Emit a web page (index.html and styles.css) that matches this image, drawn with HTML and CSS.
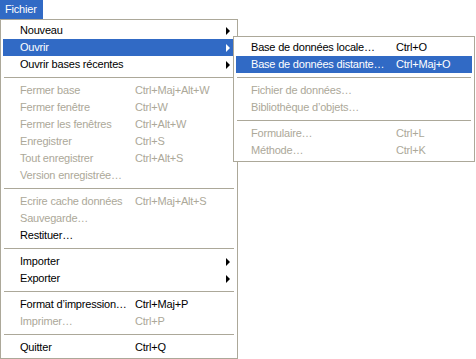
FILE: index.html
```html
<!DOCTYPE html>
<html lang="fr">
<head>
    <meta charset="UTF-8">
    <title>Fichier</title>
    <link rel="stylesheet" href="styles.css">
</head>
<body>
    <div class="menubar">
        <span class="menubar-item active">Fichier</span>
    </div>

    <div class="menu main-menu">
        <div class="item"><span class="label">Nouveau</span><span class="arrow"></span></div>
        <div class="item selected">
            <span class="label">Ouvrir</span><span class="arrow"></span>
            <div class="menu sub-menu">
                <div class="item"><span class="label">Base de données locale…</span><span class="key">Ctrl+O</span></div>
                <div class="item selected"><span class="label">Base de données distante…</span><span class="key">Ctrl+Maj+O</span></div>
                <div class="sep"></div>
                <div class="item disabled"><span class="label">Fichier de données…</span></div>
                <div class="item disabled"><span class="label">Bibliothèque d’objets…</span></div>
                <div class="sep"></div>
                <div class="item disabled"><span class="label">Formulaire…</span><span class="key">Ctrl+L</span></div>
                <div class="item disabled"><span class="label">Méthode…</span><span class="key">Ctrl+K</span></div>
            </div>
        </div>
        <div class="item"><span class="label">Ouvrir bases récentes</span><span class="arrow"></span></div>
        <div class="sep"></div>
        <div class="item disabled"><span class="label">Fermer base</span><span class="key">Ctrl+Maj+Alt+W</span></div>
        <div class="item disabled"><span class="label">Fermer fenêtre</span><span class="key">Ctrl+W</span></div>
        <div class="item disabled"><span class="label">Fermer les fenêtres</span><span class="key">Ctrl+Alt+W</span></div>
        <div class="item disabled"><span class="label">Enregistrer</span><span class="key">Ctrl+S</span></div>
        <div class="item disabled"><span class="label">Tout enregistrer</span><span class="key">Ctrl+Alt+S</span></div>
        <div class="item disabled"><span class="label">Version enregistrée…</span></div>
        <div class="sep"></div>
        <div class="item disabled"><span class="label">Ecrire cache données</span><span class="key">Ctrl+Maj+Alt+S</span></div>
        <div class="item disabled"><span class="label">Sauvegarde…</span></div>
        <div class="item"><span class="label">Restituer…</span></div>
        <div class="sep"></div>
        <div class="item"><span class="label">Importer</span><span class="arrow"></span></div>
        <div class="item"><span class="label">Exporter</span><span class="arrow"></span></div>
        <div class="sep"></div>
        <div class="item"><span class="label">Format d’impression…</span><span class="key">Ctrl+Maj+P</span></div>
        <div class="item disabled"><span class="label">Imprimer…</span><span class="key">Ctrl+P</span></div>
        <div class="sep"></div>
        <div class="item"><span class="label">Quitter</span><span class="key">Ctrl+Q</span></div>
    </div>
</body>
</html>
```

FILE: styles.css
```css
* {
    box-sizing: border-box;
}

body {
    margin: 0;
    background-color: white;
    color: black;
    font-family: "Liberation Sans", Arial, sans-serif;
    font-size: 11px;
    letter-spacing: -0.2px;
}

.menubar {
    display: flex;
    height: 19px;
}

.menubar-item {
    width: 43px;
    padding-left: 5px;
    line-height: 19px;
}

.menubar-item.active {
    background-color: #316ac5;
    color: white;
}

.menu {
    background-color: white;
    border: 1px solid #aca899;
    padding: 2px;
}

.main-menu {
    width: 238px;
}

.item {
    display: flex;
    align-items: center;
    height: 17px;
    line-height: 17px;
    white-space: nowrap;
    padding-left: 17px;
}

.main-menu > .item .label {
    width: 115px;
}

.item.selected {
    background-color: #316ac5;
    color: white;
    position: relative;
}

.item.disabled {
    color: #aca899;
}

.arrow {
    margin-left: auto;
    margin-right: 5px;
    width: 0;
    height: 0;
    border-top: 4px solid transparent;
    border-bottom: 4px solid transparent;
    border-left: 4px solid black;
}

.item.selected > .arrow {
    border-left-color: white;
}

.sep {
    height: 9px;
    padding: 4px 1px;
}

.sep::before {
    content: "";
    display: block;
    height: 1px;
    background-color: #aca899;
}

/* submenu opened from "Ouvrir", drawn over the main menu */
.sub-menu {
    position: absolute;
    left: 230px;
    top: -3px;
    width: 242px;
    color: black;
}

.sub-menu .item {
    padding-left: 15px;
}

.sub-menu .item .label {
    width: 145px;
}

.sub-menu .item.disabled {
    color: #aca899;
}

.sub-menu .item.selected {
    color: white;
}
```
